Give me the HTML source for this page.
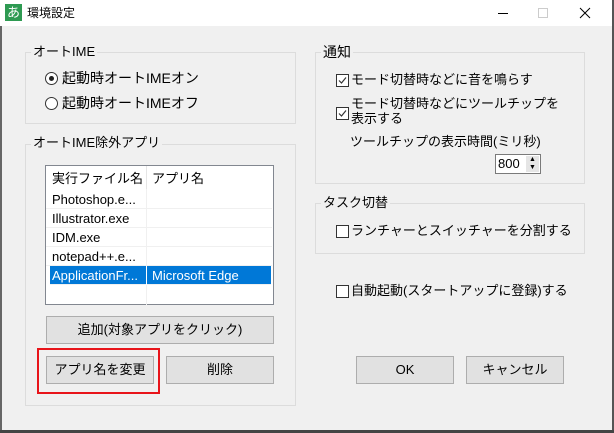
<!DOCTYPE html>
<html><head><meta charset="utf-8"><style>
*{box-sizing:border-box;margin:0;padding:0}
body{width:614px;height:433px;background:#f0f0f0;position:relative;overflow:hidden;font-family:"Liberation Sans","Noto Sans CJK JP",sans-serif;font-size:13px;color:#000}
.a{position:absolute;white-space:nowrap;line-height:16px}
.title{position:absolute;left:0;top:0;width:614px;height:26px;background:#fff}
.grp{position:absolute;border:1px solid #dcdcdc}
.lbl{position:absolute;background:#f0f0f0;padding:0 2px;line-height:16px}
.btn{position:absolute;background:#e1e1e1;border:1px solid #adadad;text-align:center;line-height:25px}
.cb{position:absolute;width:13px;height:13px;border:1px solid #333;background:#fff;overflow:hidden}
.rd{position:absolute;width:13px;height:13px;border:1px solid #333;border-radius:50%;background:#fff}
.row{position:absolute;left:0;width:226px;height:19px;border-bottom:1px solid #f0f0f0;line-height:19px}
.row span{position:absolute;left:6px}
.row b{font-weight:normal;position:absolute;left:106px}
</style></head><body>
<div class="title"></div>
<div style="position:absolute;left:5px;top:4px;width:17px;height:17px;background:#2e9a52;color:#fff;font-size:13px;line-height:17px;text-align:center">あ</div>
<div class="a" style="left:27px;top:5px;font-size:12px">環境設定</div>
<svg style="position:absolute;left:0;top:0" width="614" height="26"><line x1="498" y1="13.5" x2="508" y2="13.5" stroke="#000" stroke-width="1"/><rect x="538.5" y="8.5" width="9" height="9" fill="none" stroke="#ccc"/><path d="M580 8 L590 18 M590 8 L580 18" stroke="#000" stroke-width="1"/></svg>
<div style="position:absolute;left:0;top:26px;width:2px;height:407px;background:#666"></div>
<div style="position:absolute;right:0;top:0;width:2px;height:433px;background:#555"></div>
<div style="position:absolute;left:0;bottom:0;width:614px;height:3px;background:#444"></div>

<div class="grp" style="left:25px;top:52px;width:271px;height:72px"></div>
<div class="lbl" style="left:31px;top:44px">オートIME</div>
<div class="rd" style="left:45px;top:72px"><div style="position:absolute;left:3px;top:3px;width:5px;height:5px;border-radius:50%;background:#222"></div></div>
<div class="a" style="left:62px;top:70px;font-size:14px">起動時オートIMEオン</div>
<div class="rd" style="left:45px;top:97px"></div>
<div class="a" style="left:62px;top:95px;font-size:14px">起動時オートIMEオフ</div>

<div class="grp" style="left:25px;top:144px;width:271px;height:262px"></div>
<div class="lbl" style="left:31px;top:135px">オートIME除外アプリ</div>
<div style="position:absolute;left:45px;top:165px;width:229px;height:140px;background:#fff;border:1px solid #828790">
 <div class="a" style="left:6px;top:5px">実行ファイル名</div>
 <div style="position:absolute;left:100px;top:0;width:1px;height:23px;background:#e5e5e5"></div>
 <div class="a" style="left:106px;top:5px">アプリ名</div>
 <div style="position:absolute;left:100px;top:23px;width:1px;height:117px;background:#f0f0f0"></div>
 <div class="row" style="top:24px"><span>Photoshop.e...</span></div>
 <div class="row" style="top:43px"><span>Illustrator.exe</span></div>
 <div class="row" style="top:62px"><span>IDM.exe</span></div>
 <div class="row" style="top:81px"><span>notepad++.e...</span></div>
 <div class="row" style="top:100px;left:4px;width:221px;background:#0078d7;color:#fff"><span style="left:2px">ApplicationFr...</span><b style="left:102px">Microsoft Edge</b><i style="position:absolute;left:96px;top:0;width:1px;height:19px;background:#fff"></i></div>
</div>
<div class="btn" style="left:46px;top:316px;width:228px;height:28px">追加(対象アプリをクリック)</div>
<div style="position:absolute;left:37px;top:348px;width:123px;height:46px;border:2px solid #e8141a"></div>
<div class="btn" style="left:46px;top:356px;width:108px;height:28px">アプリ名を変更</div>
<div class="btn" style="left:166px;top:356px;width:108px;height:28px">削除</div>

<div class="grp" style="left:315px;top:52px;width:270px;height:132px"></div>
<div class="lbl" style="left:321px;top:44px;font-size:14px">通知</div>
<svg style="position:absolute;left:336px;top:74px" width="13" height="13"><rect x="0.5" y="0.5" width="12" height="12" fill="#fff" stroke="#333"/><path d="M3 6.5 L5.5 9 L10 3.5" fill="none" stroke="#333" stroke-width="1.2"/></svg>
<div class="a" style="left:351px;top:72px;font-size:13px">モード切替時などに音を鳴らす</div>
<svg style="position:absolute;left:336px;top:107px" width="13" height="13"><rect x="0.5" y="0.5" width="12" height="12" fill="#fff" stroke="#333"/><path d="M3 6.5 L5.5 9 L10 3.5" fill="none" stroke="#333" stroke-width="1.2"/></svg>
<div class="a" style="left:351px;top:96px;font-size:13px;line-height:15px">モード切替時などにツールチップを<br>表示する</div>
<div class="a" style="left:350px;top:134px;font-size:13px">ツールチップの表示時間(ミリ秒)</div>
<div style="position:absolute;left:495px;top:154px;width:46px;height:20px;background:#fff;border:1px solid #7a7a7a"><span class="a" style="left:2px;top:1px">800</span><div style="position:absolute;right:1px;top:1px;width:13px;height:16px;background:#e5e5e5;font-size:7px;line-height:8px;text-align:center">▲<br>▼</div></div>

<div class="grp" style="left:315px;top:203px;width:270px;height:51px"></div>
<div class="lbl" style="left:321px;top:195px;font-size:13px">タスク切替</div>
<div class="cb" style="left:336px;top:225px"></div>
<div class="a" style="left:351px;top:223px;font-size:13px">ランチャーとスイッチャーを分割する</div>
<div class="cb" style="left:336px;top:285px"></div>
<div class="a" style="left:351px;top:283px;font-size:13px">自動起動(スタートアップに登録)する</div>

<div class="btn" style="left:356px;top:356px;width:98px;height:28px">OK</div>
<div class="btn" style="left:466px;top:356px;width:98px;height:28px">キャンセル</div>
</body></html>
